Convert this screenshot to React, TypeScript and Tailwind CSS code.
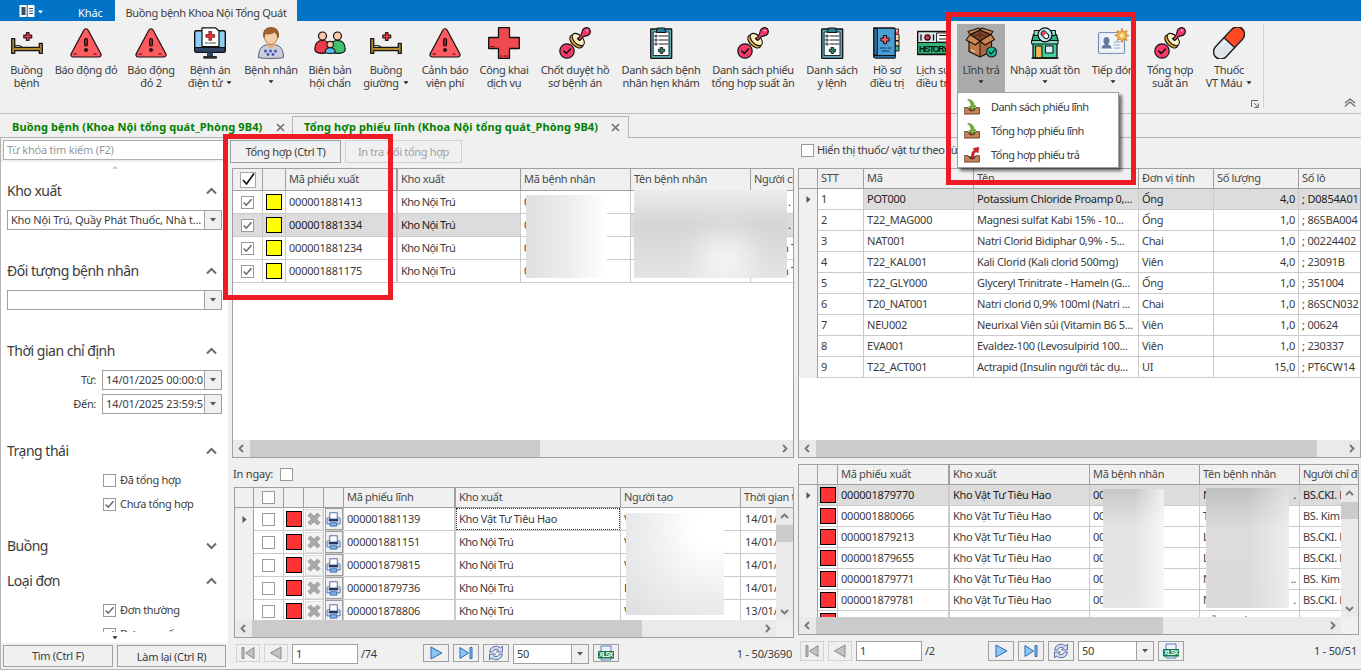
import React from "react";

type Kids = { children?: React.ReactNode };

/* ---------- ribbon icons ---------- */

const Svg = ({ children, size = "size-8", box = "0 0 32 32" }: Kids & { size?: string; box?: string }) => (
  <svg viewBox={box} className={`${size} shrink-0`} fill="none" strokeLinejoin="round" strokeLinecap="round">
    {children}
  </svg>
);

const Bed = () => (
  <Svg>
    <path d="M3.5 18.5h5l2.5 1.5" stroke="#333" strokeWidth="1.2" />
    <path d="M.7 11.7h3v8.6h24.6v-4h3v10h-3v-2.6H3.7v2.6h-3z" fill="#b08a28" stroke="#151515" strokeWidth="1.3" />
    <path d="M15.500 5.500h2.500v2.700h2.700v2.600H18v2.700h-2.500v-2.700h-2.700V8.200h2.700z" fill="#e5404e" stroke="#3b1116" strokeWidth="1.2" />
  </Svg>
);

const Warning = () => (
  <Svg>
    <path d="M13.8 3.2a2.4 2.4 0 0 1 4.4 0l12.6 23.5c.7 1.6-.2 3.3-2 3.3H3.200c-1.800 0-2.700-1.700-2-3.300z" fill="#ff5a60" stroke="#111" strokeWidth="1.2" />
    <rect x="14.500" y="11.500" width="3" height="7.500" rx="1.500" fill="#8c2a28" stroke="#111" strokeWidth="1.100" />
    <circle cx="16" cy="23" r="1.700" fill="#301010" stroke="#111" strokeWidth=".6" />
    <path d="M4 27h2.500M24 27h2" stroke="#301010" strokeWidth="1.200" />
  </Svg>
);

const Monitor = () => (
  <Svg>
    <rect x=".7" y="3.700" width="30.600" height="21.600" rx="1.500" fill="#8fd0f7" stroke="#111" strokeWidth="1.400" />
    <path d="M1 20.500h30v3.300a1.500 1.500 0 0 1-1.500 1.500h-27A1.500 1.500 0 0 1 1 23.800z" fill="#2f4666" stroke="#111" strokeWidth="1" />
    <path d="M13 25.500h6v3.500h-6z" fill="#2f4666" />
    <path d="M10 29.500h12.500v1.700H10z" fill="#24364f" stroke="#111" strokeWidth=".8" />
    <path d="M8 .8h13.500L25 4v15.500H8z" fill="#fff" stroke="#111" strokeWidth="1.200" />
    <path d="M14.900 4.500h2.800v3h3v2.800h-3v3h-2.800v-3h-3V7.500h3z" fill="#e5303d" stroke="#611" strokeWidth=".7" />
    <path d="M11.500 16h2M15 16h6.500" stroke="#333" strokeWidth=".9" />
  </Svg>
);

const Patient = () => (
  <Svg>
    <path d="M3.500 30.500c0-8 3-12 8.500-12.700h8c5.500.7 8.500 4.700 8.500 12.700-3 1.300-22 1.300-25 0z" fill="#c9cedb" stroke="#596075" strokeWidth="1" />
    <path d="M12 14h8v4.500a4.200 4.200 0 0 1-8 0z" fill="#e6b186" />
    <ellipse cx="16" cy="10" rx="6.500" ry="7.500" fill="#f6cda6" stroke="#9a6a3b" strokeWidth=".8" />
    <path d="M8.800 10C7.500 3.500 11 .6 16 .6c6 0 8.500 4 7.300 10-.7-2.600-2-4.300-4-5.600-3 2.300-7.500 2.300-9 1.500-.7 1-1.200 2-1.500 3.500z" fill="#a5632c" stroke="#70401b" strokeWidth=".7" />
    <g fill="#4a56b8">
      <circle cx="10.500" cy="24" r="1.500" /><circle cx="15.500" cy="24" r="1.500" /><circle cx="20.500" cy="24" r="1.500" />
      <circle cx="13" cy="27.500" r="1.400" /><circle cx="18" cy="27.500" r="1.400" />
    </g>
  </Svg>
);

const People = () => (
  <Svg>
    <circle cx="8.500" cy="9" r="4" fill="#fbc7a8" stroke="#111" strokeWidth="1.200" />
    <circle cx="23.500" cy="9" r="4" fill="#fbc7a8" stroke="#111" strokeWidth="1.200" />
    <path d="M.8 22.500c0-6 3-9 7.700-9s7 2 7 6-2.500 6.800-7 6.800-7.700-1.300-7.700-3.800z" fill="#ee3b4c" stroke="#111" strokeWidth="1.200" />
    <path d="M31.200 22.500c0-6-3-9-7.700-9s-7 2-7 6 2.500 6.800 7 6.800 7.700-1.300 7.700-3.800z" fill="#41c170" stroke="#111" strokeWidth="1.200" />
    <path d="M11.200 25.800c0-3 2-5 5-5s5 2 5 5c-3 .9-7 .9-10 0z" fill="#57bdf5" stroke="#111" strokeWidth="1.100" />
    <circle cx="16.200" cy="17.500" r="3.200" fill="#fbc7a8" stroke="#111" strokeWidth="1.100" />
  </Svg>
);

const Cross = () => (
  <Svg>
    <path d="M10.500.7h11v9.800h9.800v11h-9.800v9.800h-11v-9.800H.7v-11h9.800z" fill="#f04a50" stroke="#111" strokeWidth="1.300" />
    <path d="M12.500 29h1.500M16 29h4M3 19.500h3" stroke="#6d1a1f" strokeWidth="1.100" />
  </Svg>
);

const Stamp = () => (
  <Svg>
    <ellipse cx="17.300" cy="14.500" rx="4.500" ry="8" transform="rotate(-45 17.300 14.500)" fill="#e8ab37" stroke="#111" strokeWidth="1.100" />
    <ellipse cx="19.300" cy="12.500" rx="4.300" ry="7.500" transform="rotate(-45 19.300 12.500)" fill="#fdf0c0" stroke="#111" strokeWidth="1.100" />
    <path d="M18.500 11.500c3-1.500 4-3.500 4.500-6.500.5-3 3-4.700 5.800-4.200 3 .9 3.200 4.700 1.200 6.700-1.600 1.600-4 1.200-5.700 2.300-1.200.8-2 2.700-3.800 3.700z" fill="#f63a68" stroke="#111" strokeWidth="1.200" />
    <circle cx="28" cy="3.500" r=".8" fill="#fff" />
    <circle cx="8" cy="24" r="7.200" fill="#f63a68" stroke="#111" strokeWidth="1.200" />
    <path d="M4.800 24l2.400 2.400L11.500 22" stroke="#111" strokeWidth="1.500" />
  </Svg>
);

const Clipboard = () => (
  <Svg>
    <rect x="5.700" y="2" width="21" height="29.300" rx=".6" fill="#5fa9b0" stroke="#111" strokeWidth="1.300" />
    <rect x="8.500" y="5" width="15.500" height="23.500" fill="#fff" stroke="#1a2f33" strokeWidth="1" />
    <path d="M12.700 1h7l1 4.500h-9z" fill="#2d7c96" stroke="#111" strokeWidth="1" />
    <path d="M14 9h9M14 13h9M14 17h9" stroke="#222" strokeWidth="1" />
    <path d="M10.300 8.200h1.700v1.700h-1.700zM10.300 12.200h1.700v1.700h-1.700zM10.300 16.200h1.700v1.700h-1.700z" stroke="#222" strokeWidth=".9" />
    <path d="M15.300 20.500h2.400v1.800h1.900v2.400h-1.900v1.800h-2.400v-1.800h-1.900v-2.400h1.900z" fill="#1f8a68" stroke="#111" strokeWidth=".8" />
  </Svg>
);

const Book = () => (
  <Svg>
    <path d="M21 2h6.500v5H24zM22 7.500h6v6h-6zM22 14h6v5h-6z" fill="#f6d0a0" stroke="#111" strokeWidth=".9" />
    <path d="M22 4.500h5.500v3H22z" fill="#e8536a" />
    <path d="M22 19h6v5h-6z" fill="#4bb58f" stroke="#111" strokeWidth=".9" />
    <path d="M2.800 1h19.700c1 0 1.700.7 1.700 1.700V29H5a2.200 2.200 0 0 0-2.200 1z" fill="#4b9fd8" stroke="#111" strokeWidth="1.300" />
    <path d="M3.300 1.500h3V28h-3zM3 28.500h21.200v2.700H4.500A1.400 1.400 0 0 1 3 30z" fill="#2d70a6" stroke="#111" strokeWidth="1" />
    <path d="M12.500 8.500h3v2.600h2.600v3h-2.600v2.600h-3v-2.600H9.900v-3h2.600z" fill="#fb5866" stroke="#111" strokeWidth="1" />
    <path d="M9 21h6M17 21h3M11 24h7" stroke="#163550" strokeWidth="1.100" />
  </Svg>
);

const History = () => (
  <Svg>
    <rect x=".7" y="4.500" width="34" height="23" fill="#dfe3e6" stroke="#111" strokeWidth="1.400" />
    <path d="M1 15.500h33V27H1z" fill="#32b276" stroke="#111" strokeWidth="1" />
    <circle cx="10.500" cy="10.500" r="2.600" fill="#ee3340" stroke="#111" strokeWidth="1.200" />
    <path d="M4 8v5M16.500 8v5" stroke="#111" strokeWidth="1.300" />
    <path d="M20 6h12v9H20z" fill="#fff" stroke="#111" strokeWidth=".9" />
    <path d="M22.500 8.500h8M22.500 12h8" stroke="#111" strokeWidth="1.200" />
    <text x="2" y="24.600" fontSize="8.500" fontWeight="700" fontFamily="Liberation Sans, sans-serif" textLength="29" fill="#06170f">HISTORY</text>
  </Svg>
);

const Box = () => (
  <Svg>
    <path d="M4 10.500l11 4.500 11.500-4.500V24L15 30 4 24.500z" fill="#c17b4d" stroke="#1d120b" strokeWidth="1.200" />
    <path d="M15 15v15l11.500-6V10.500z" fill="#ad683d" stroke="#1d120b" strokeWidth="1" />
    <path d="M5 8L15 2.500 26 8l-11 6z" fill="#7b4627" stroke="#1d120b" strokeWidth="1.100" />
    <path d="M15 2.500V10M8 9.500l7-2 7 2" stroke="#4b2815" strokeWidth=".9" />
    <path d="M5 7.500L1 13l9.500 5L15 14zM26 7.500l3.500 5-9.500 5.500-5-4zM5 7.500L3 4.500 14 1l1 2zM26 7.500l2-3L17 1l-2 2z" fill="#cb8757" stroke="#1d120b" strokeWidth="1.100" />
    <path d="M6.500 23l3 1.500" stroke="#f3d4bb" strokeWidth="1.300" />
    <circle cx="26.500" cy="25" r="5" fill="#1fbf9a" stroke="#0a2a24" strokeWidth="1.200" />
    <path d="M24 25l2 2 3.300-3.500" stroke="#07241d" strokeWidth="1.200" />
  </Svg>
);

const Shop = () => (
  <Svg>
    <path d="M4 15.500h24V31H4z" fill="#44d09a" stroke="#111" strokeWidth="1.300" />
    <path d="M4.500 7.500h23l1.700 6.500H2.800z" fill="#2fb583" stroke="#111" strokeWidth="1.200" />
    <path d="M5.500 3.500h4.500v5H5.500zM22 3.500h4.500v5H22zM3 13.500h26v3.500H3z" fill="#7fe0bd" stroke="#111" strokeWidth="1" />
    <circle cx="16" cy="7.800" r="7" fill="#c9e9f6" stroke="#111" strokeWidth="1.200" />
    <g transform="rotate(-45 16 7.800)">
      <rect x="13.500" y="3.500" width="5" height="8.600" rx="2.500" fill="#fff" stroke="#111" strokeWidth="1" />
      <path d="M14 7.500V6a2 2 0 0 1 4 0v1.500z" fill="#ef4268" />
    </g>
    <rect x="6.500" y="19" width="6.500" height="12" fill="#f2b659" stroke="#111" strokeWidth="1.100" />
    <rect x="16.500" y="19" width="7.500" height="7" fill="#d7f1fb" stroke="#111" strokeWidth="1.100" />
    <path d="M3 31.200h26" stroke="#111" strokeWidth="1.300" />
  </Svg>
);

const Card = () => (
  <Svg>
    <rect x="1.500" y="5.500" width="26" height="21" rx="1.500" fill="#f2f6fb" stroke="#7b90b5" strokeWidth="1.100" />
    <path d="M3 7h23v18H3z" stroke="#dbe5f2" strokeWidth="1.200" />
    <path d="M4.500 21.500c0-2.500 1.500-3.300 3.500-4-1.300-1-1.500-2.500-1.500-4 0-2 1-3.500 3-3.500s3 1.500 3 3.500c0 1.500-.3 3-1.500 4 2 .7 3.500 1.500 3.500 4z" fill="#66799c" />
    <path d="M17 15h6M17 18h6M17 21h6" stroke="#93a5c2" strokeWidth="1.200" />
    <path d="M25 1.500l1.500 3.600 3.600-1.500-1.500 3.600 3.300 1.300-3.300 1.500 1.500 3.500-3.600-1.500L25 15.600 23.500 12l-3.600 1.500 1.500-3.500-3.500-1.500 3.500-1.300-1.500-3.600 3.600 1.500z" fill="#f5b64b" stroke="#c77b20" strokeWidth=".8" />
    <circle cx="25" cy="8.500" r="2.300" fill="#ffe3a0" />
  </Svg>
);

const Pill = () => (
  <Svg>
    <g transform="rotate(43 16 16)">
      <path d="M9.200 15.500V3.500a6.800 6.800 0 0 1 13.600 0v12z" fill="#ff4a24" />
      <path d="M9.200 2.500a6.800 6.800 0 0 1 13.600 0v3H9.200z" fill="#ff4a24" />
      <path d="M9.200 15.500v13a6.800 6.800 0 0 0 13.600 0v-13z" fill="#dde5e9" />
      <rect x="8.700" y="-3.300" width="14.600" height="38.600" rx="7.300" stroke="#1b1b1b" strokeWidth="1.400" />
      <path d="M9.200 15.500h13.600" stroke="#1b1b1b" strokeWidth="1.200" />
      <path d="M12 17.500v7" stroke="#fff" strokeWidth="1.300" />
    </g>
  </Svg>
);

const Crate = ({ red }: { red?: boolean }) => (
  <Svg size="size-4" box="0 0 16 16">
    <path d="M.6 8.700h3.600l1 2.300h5.600l1-2.300h3.600V15H.6z" fill="#c98556" stroke="#5a3520" strokeWidth=".9" />
    <path d="M4.800 9.200h6.400l-1.200 3H6z" fill="#5e3826" />
    {red ? (
      <path d="M7.500 11.500V8.500C7.500 5.500 8.500 4 10.500 3.500L9 1.500l6-1.200L14 6l-1.700-1.300C10.500 5.400 10 6.500 10 8.500v3z" fill="#dc2430" stroke="#8d1219" strokeWidth=".5" />
    ) : (
      <path d="M4 .6c4 0 6 2.600 6 6.200h1.800L8.500 11.500 4.800 7.500h2.400C7.200 4.500 6 2 4 .6z" fill="#7cb534" stroke="#426e17" strokeWidth=".6" />
    )}
  </Svg>
);

/* ---------- ribbon ---------- */

type Item = { icon: () => React.JSX.Element; lines: string[]; cls: string; drop?: "inline" | "below" };

const items: Item[] = [
  { icon: Bed, lines: ["Buồng", "bệnh"], cls: "ml-[6px] w-[41px]" },
  { icon: Warning, lines: ["Báo động đỏ"], cls: "ml-[4px] w-[70px]" },
  { icon: Warning, lines: ["Báo động", "đỏ 2"], cls: "ml-[4px] w-[52px]" },
  { icon: Monitor, lines: ["Bệnh án", "điện tử"], cls: "ml-[5px] w-[56px]", drop: "inline" },
  { icon: Patient, lines: ["Bệnh nhân"], cls: "ml-[3px] w-[60px]", drop: "below" },
  { icon: People, lines: ["Biên bản", "hội chẩn"], cls: "ml-[5px] w-[48px]" },
  { icon: Bed, lines: ["Buồng", "giường"], cls: "ml-[7px] w-[50px]", drop: "inline" },
  { icon: Warning, lines: ["Cảnh báo", "viện phí"], cls: "ml-[5px] w-[58px]" },
  { icon: Cross, lines: ["Công khai", "dịch vụ"], cls: "ml-[3px] w-[54px]" },
  { icon: Stamp, lines: ["Chốt duyệt hồ", "sơ bệnh án"], cls: "ml-[6px] w-[76px]" },
  { icon: Clipboard, lines: ["Danh sách bệnh", "nhân hẹn khám"], cls: "ml-[6px] w-[84px]" },
  { icon: Stamp, lines: ["Danh sách phiếu", "tổng hợp suất ăn"], cls: "ml-[6px] w-[88px]" },
  { icon: Clipboard, lines: ["Danh sách", "y lệnh"], cls: "ml-[7px] w-[56px]" },
  { icon: Book, lines: ["Hồ sơ", "điều trị"], cls: "ml-[8px] w-[38px]" },
  { icon: History, lines: ["Lịch sử", "điều trị"], cls: "ml-[7px] w-[40px]" },
  { icon: Box, lines: ["Lĩnh trả"], cls: "ml-[4px] w-[48px] bg-[#ababab]", drop: "below" },
  { icon: Shop, lines: ["Nhập xuất tồn"], cls: "ml-[2px] w-[76px]", drop: "below" },
  { icon: Card, lines: ["Tiếp đón"], cls: "ml-[7px] w-[46px]", drop: "below" },
  { icon: Stamp, lines: ["Tổng hợp", "suất ăn"], cls: "ml-[7px] w-[54px]" },
  { icon: Pill, lines: ["Thuốc", "VT Máu"], cls: "ml-[4px] w-[56px]", drop: "inline" },
];

const Caret = ({ dark = true }: { dark?: boolean }) => (
  <svg viewBox="0 0 6 4" className="h-[4px] w-[6px] shrink-0">
    <path d="M.5.300h5L3 3.200z" fill={dark ? "#222" : "#c0c0c0"} />
  </svg>
);

const Ribbon = () => (
  <div className="flex h-[93px] shrink-0 border-b border-[#bdbdbd] bg-[#f0f0f0] pt-[3px]">
    {items.map((it, i) => (
      <div key={i} className={`flex h-[68px] shrink-0 flex-col items-center pt-[3px] ${it.cls}`}>
        <it.icon />
        <div className="mt-[4px] whitespace-nowrap text-center leading-[13px]">
          <div>{it.lines[0]}</div>
          {it.lines[1] && (
            <div className="flex items-center justify-center gap-[4px]">
              {it.lines[1]}
              {it.drop === "inline" && <Caret />}
            </div>
          )}
          {it.drop === "below" && (
            <div className="flex h-[12px] items-center justify-center"><Caret /></div>
          )}
        </div>
      </div>
    ))}
    <div className="ml-[-6px] flex h-[84px] w-[13px] flex-col justify-end border-r border-[#d0d0d0]">
      <svg viewBox="0 0 8 8" className="size-[8px]" fill="none" stroke="#666">
        <path d="M.5 7V.5H7M3 3l4 4M7.300 3.500v4h-4" />
      </svg>
    </div>
    <div className="flex h-[86px] flex-1 items-end justify-end pr-[5px] pb-[3px]">
      <svg viewBox="0 0 12 9" className="h-[9px] w-[12px]" fill="none" stroke="#666" strokeWidth="1.100">
        <path d="M1 5l5-4 5 4M1 8.500l2-2 3-2.500 3 2.500 2 2" />
      </svg>
    </div>
  </div>
);

/* ---------- small controls ---------- */

const Check = ({ on, big }: { on?: boolean; big?: boolean }) =>
  big ? (
    <span className="flex size-[16px] shrink-0 items-center justify-center border border-[#a8a8a8] bg-white">
      <svg viewBox="0 0 14 14" className="size-[15px]" fill="none" stroke="#111" strokeWidth="1.700">
        <path d="M2 7.500l3.500 4L13 1" />
      </svg>
    </span>
  ) : (
    <span className="flex size-[13px] shrink-0 items-center justify-center border border-[#9a9a9a] bg-white">
      {on && (
        <svg viewBox="0 0 11 11" className="size-[11px]" fill="none" stroke="#666" strokeWidth="1.500">
          <path d="M1.700 5.500l2.500 2.700 5.300-6" />
        </svg>
      )}
    </span>
  );

const Arrow = ({ dir }: { dir: "l" | "r" | "u" | "d" }) => {
  const d = { l: "M6 1L2.500 4.500 6 8", r: "M3 1l3.500 3.500L3 8", u: "M1 6l3.500-3.500L8 6", d: "M1 3l3.500 3.500L8 3" }[dir];
  return (
    <span className="flex size-[17px] shrink-0 items-center justify-center">
      <svg viewBox="0 0 9 9" className="size-[9px]" fill="none" stroke="#777" strokeWidth="1.900"><path d={d} /></svg>
    </span>
  );
};

const HScroll = ({ thumb, corner }: { thumb: string; corner?: boolean }) => (
  <div className="flex h-[17px] shrink-0 bg-[#f0f0f0]">
    <div className="flex flex-1 bg-[#eaeaea]">
      <Arrow dir="l" />
      <div className={`bg-[#cbcbcb] ${thumb}`} />
      <div className="flex-1" />
      <Arrow dir="r" />
    </div>
    {corner && <div className="w-[17px]" />}
  </div>
);

const VScroll = () => (
  <div className="flex w-[17px] shrink-0 flex-col bg-[#eaeaea]">
    <Arrow dir="u" />
    <div className="h-[17px] bg-[#cbcbcb]" />
    <div className="flex-1" />
    <Arrow dir="d" />
  </div>
);

const Combo = ({ text, cls }: { text: string; cls: string }) => (
  <div className={`flex h-[20px] border border-[#a0a0a0] bg-white ${cls}`}>
    <div className="flex-1 overflow-hidden whitespace-nowrap pl-[3px] leading-[18px]">{text}</div>
    <div className="flex w-[17px] shrink-0 items-center justify-center border-l border-[#a0a0a0] bg-[#f0f0f0]">
      <svg viewBox="0 0 6 4" className="h-[4px] w-[6px]"><path d="M0 0h6L3 3.500z" fill="#555" /></svg>
    </div>
  </div>
);

/* ---------- grids ---------- */

const Cell = ({ w, children, cls = "", thick, head }: Kids & { w: string; cls?: string; thick?: boolean; head?: boolean }) => (
  <div
    className={`flex shrink-0 items-center overflow-hidden whitespace-nowrap border-b ${
      head ? "border-[#a0a0a0] text-[#484848]" : "border-b-[#cbcbcb] border-r-[#cbcbcb]"
    } ${thick ? "border-r-2 border-r-[#a0a0a0]" : "border-r"} ${w} ${cls}`}
  >
    {children}
  </div>
);

const Gutter = ({ active, cls = "" }: { active?: boolean; cls?: string }) => (
  <div className={`flex w-[19px] shrink-0 items-center justify-center border-r border-[#a0a0a0] bg-[#f0f0f0] ${cls}`}>
    {active && <svg viewBox="0 0 5 7" className="h-[7px] w-[5px]"><path d="M.5 0L4.500 3.500.500 7z" fill="#555" /></svg>}
  </div>
);

const Chip = ({ cls }: { cls: string }) => <span className={`size-[16px] shrink-0 border border-black ${cls}`} />;
const P = "pl-[3px]";
const CODE = "pl-[3px] tracking-[-0.2px]";

const issueRows = [
  ["000001881413", "0", "."],
  ["000001881334", "0", "."],
  ["000001881234", "0", "n Thị"],
  ["000001881175", "0", "n Thị"],
];

const IssueGrid = () => (
  <div className="ml-[4px] mt-[5px] flex h-[290px] w-[562px] flex-col overflow-hidden border border-[#a0a0a0] bg-white">
    <div className="relative flex-1 overflow-hidden">
      <div className="flex h-[22px] bg-[#f0f0f0]">
        <Cell head w="w-[30px]" cls="justify-center"><Check big /></Cell>
        <Cell head w="w-[23px]" />
        <Cell head thick w="w-[112px]" cls={P}>Mã phiếu xuất</Cell>
        <Cell head w="w-[123px]" cls={P}>Kho xuất</Cell>
        <Cell head w="w-[110px]" cls={P}>Mã bệnh nhân</Cell>
        <Cell head w="w-[120px]" cls={P}>Tên bệnh nhân</Cell>
        <Cell head w="w-[80px]" cls={P}>Người chỉ định</Cell>
      </div>
      {issueRows.map((r, i) => {
        const sel = i === 1 ? "bg-[#dcdcdc] text-[#1e1e1e]" : "";
        return (
          <div key={i} className="flex h-[23px]">
            <Cell w="w-[30px]" cls={`justify-center ${sel}`}><Check on /></Cell>
            <Cell w="w-[23px]" cls={`justify-center ${sel}`}><Chip cls="bg-[#ffff00]" /></Cell>
            <Cell thick w="w-[112px]" cls={`${CODE} ${sel}`}>{r[0]}</Cell>
            <Cell w="w-[123px]" cls={`pl-[3px] tracking-[-0.6px] ${sel}`}>Kho Nội Trú</Cell>
            <Cell w="w-[110px]" cls={P}>{r[1]}</Cell>
            <Cell w="w-[120px]" cls={sel} />
            <Cell w="w-[80px]" cls={`${i < 2 ? "pl-[37px]" : "pl-[31px]"} ${sel}`}>{r[2]}</Cell>
          </div>
        );
      })}
      <div className="absolute left-[293px] top-[26px] h-[83px] w-[81px] bg-linear-to-r from-[#dfe0df] via-[#ebeceb] to-white" />
      <div className="absolute left-[401px] top-[21px] h-[88px] w-[153px] overflow-hidden bg-linear-to-b from-[#ececee] via-[#d5d5d7] via-40% to-[#e4e4e6]">
        <div className="absolute left-[66px] top-[46px] h-[46px] w-[50px] rounded-full bg-white/85 blur-lg" />
      </div>
    </div>
    <HScroll thumb="w-[290px]" />
  </div>
);

const drugs = [
  ["1", "POT000", "Potassium Chloride Proamp 0,...", "Ống", "4,0", "; D0854A01"],
  ["2", "T22_MAG000", "Magnesi sulfat Kabi 15% - 10...", "Ống", "1,0", "; 86SBA004"],
  ["3", "NAT001", "Natri Clorid Bidiphar 0,9% - 5...", "Chai", "1,0", "; 00224402"],
  ["4", "T22_KAL001", "Kali Clorid (Kali clorid 500mg)", "Viên", "4,0", "; 23091B"],
  ["5", "T22_GLY000", "Glyceryl Trinitrate - Hameln (G...", "Ống", "1,0", "; 351004"],
  ["6", "T20_NAT001", "Natri clorid 0,9% 100ml (Natri ...", "Chai", "1,0", "; 86SCN032"],
  ["7", "NEU002", "Neurixal Viên sủi (Vitamin B6 5...", "Viên", "1,0", "; 00624"],
  ["8", "EVA001", "Evaldez-100 (Levosulpirid 100...", "Viên", "1,0", "; 230337"],
  ["9", "T22_ACT001", "Actrapid (Insulin người tác dụ...", "UI", "15,0", "; PT6CW14"],
];

const DrugGrid = () => (
  <div className="mt-[5px] flex h-[290px] w-[563px] flex-col overflow-hidden border border-[#a0a0a0] bg-white">
    <div className="flex-1 overflow-hidden">
      <div className="flex h-[20px] bg-[#f0f0f0]">
        <Gutter cls="border-b" />
        <Cell head w="w-[46px]" cls={P}>STT</Cell>
        <Cell head w="w-[110px]" cls={P}>Mã</Cell>
        <Cell head w="w-[165px]" cls={P}>Tên</Cell>
        <Cell head w="w-[75px]" cls={P}>Đơn vị tính</Cell>
        <Cell head w="w-[85px]" cls={P}>Số lượng</Cell>
        <Cell head w="w-[70px]" cls={P}>Số lô</Cell>
      </div>
      {drugs.map((r, i) => {
        const sel = i === 0 ? "bg-[#dcdcdc] text-[#1e1e1e]" : "";
        return (
          <div key={i} className="flex h-[21px]">
            <Gutter active={i === 0} />
            <Cell w="w-[46px]" cls={P}>{r[0]}</Cell>
            <Cell w="w-[110px]" cls={`${CODE} ${sel}`}>{r[1]}</Cell>
            <Cell w="w-[165px]" cls={`${P} ${sel}`}>{r[2]}</Cell>
            <Cell w="w-[75px]" cls={`${P} ${sel}`}>{r[3]}</Cell>
            <Cell w="w-[85px]" cls={`justify-end pr-[3px] tracking-[-0.2px] ${sel}`}>{r[4]}</Cell>
            <Cell w="w-[70px]" cls={`${CODE} ${sel}`}>{r[5]}</Cell>
          </div>
        );
      })}
    </div>
    <HScroll thumb="w-[501px]" />
  </div>
);

const Cancel = () => (
  <span className="flex h-[21px] w-[18px] items-center justify-center border border-[#dedede] bg-[#f4f4f4]">
    <svg viewBox="0 0 12 12" className="size-[14px] shrink-0">
      <path d="M3 .8L6 3.700 9 .8 11.200 3 8.300 6l2.900 3L9 11.200 6 8.300 3 11.200.800 9 3.700 6 .800 3z" fill="#a9a9a9" stroke="#8e8e8e" strokeWidth=".6" />
    </svg>
  </span>
);

const Printer = () => (
  <span className="flex h-[22px] w-[18px] items-center justify-center border border-[#9c9c9c] bg-[#f0f0f0]">
    <svg viewBox="0 0 16 16" className="size-[15px] shrink-0">
      <path d="M1 7.500c0-1 .5-1.500 1.500-1.500h11c1 0 1.500.5 1.500 1.500v5.200H1z" fill="#dfe8f8" stroke="#4a6aa8" />
      <path d="M4 .8h8v6.700H4z" fill="#fff" stroke="#4a6aa8" />
      <path d="M3 7.500h10v2.500H3z" fill="#26365c" />
      <path d="M4.500 11.500h7V15h-7z" fill="#7db8f0" stroke="#3c62a5" />
    </svg>
  </span>
);

const slips = [
  ["000001881139", "Kho Vật Tư Tiêu Hao", "V", "14/01/2025"],
  ["000001881151", "Kho Nội Trú", "V", "14/01/2025"],
  ["000001879815", "Kho Nội Trú", "V", "14/01/2025"],
  ["000001879736", "Kho Nội Trú", "P", "14/01/2025"],
  ["000001878806", "Kho Nội Trú", "V", "13/01/2025"],
];

const SlipGrid = () => (
  <div className="ml-[6px] flex h-[151px] w-[560px] shrink-0 flex-col overflow-hidden border border-[#a0a0a0] bg-white">
    <div className="flex h-[20px] shrink-0 overflow-hidden bg-[#f0f0f0]">
      <Gutter cls="border-b" />
      <Cell head w="w-[30px]" cls="justify-center"><Check /></Cell>
      <Cell head w="w-[20px]" /><Cell head w="w-[20px]" /><Cell head w="w-[20px]" />
      <Cell head thick w="w-[112px]" cls={P}>Mã phiếu lĩnh</Cell>
      <Cell head w="w-[165px]" cls={P}>Kho xuất</Cell>
      <Cell head w="w-[120px]" cls={P}>Người tạo</Cell>
      <Cell head w="w-[80px]" cls={P}>Thời gian tạo</Cell>
    </div>
    <div className="flex h-[112px] shrink-0">
      <div className="relative flex-1 overflow-hidden">
        {slips.map((r, i) => (
          <div key={i} className="flex h-[23px]">
            <Gutter active={i === 0} />
            <Cell w="w-[30px]" cls="justify-center"><Check /></Cell>
            <Cell w="w-[20px]" cls="justify-center"><Chip cls="bg-[#ff3333]" /></Cell>
            <Cell w="w-[20px]" cls="justify-center"><Cancel /></Cell>
            <Cell w="w-[20px]" cls="justify-center"><Printer /></Cell>
            <Cell thick w="w-[112px]" cls={CODE}>{r[0]}</Cell>
            <Cell w="w-[165px]">
              <span className={`flex h-full w-full items-center ${i === 0 ? "border border-dotted border-[#333] pl-[2px]" : "pl-[3px] tracking-[-0.6px]"}`}>{r[1]}</span>
            </Cell>
            <Cell w="w-[120px]" cls={P}>{r[2]}</Cell>
            <Cell w="w-[80px]" cls="pl-[4px] tracking-[-0.1px]">{r[3]}</Cell>
          </div>
        ))}
        <div className="absolute left-[391px] top-[5px] h-[102px] w-[98px] bg-radial-[at_90%_15%] from-white from-15% via-[#eeeeef] via-55% to-[#dddedf]" />
      </div>
      <VScroll />
    </div>
    <HScroll thumb="w-[390px]" corner />
  </div>
);

const details = [
  ["000001879770", "N", ".", "BS.CKI. Ng"],
  ["000001880066", "T", "", "BS. Kim Ng"],
  ["000001879213", "L", "", "BS.CKI. Ng"],
  ["000001879655", "L", "", "BS.CKI. Ng"],
  ["000001879771", "N", "..", "BS. Kim Ng"],
  ["000001879781", "N", ".", "BS.CKI. Ng"],
  ["000001879790", "Đỗ Thị Hồng", "", "BS.CKI. Ng"],
];

const DetailGrid = () => (
  <div className="mt-[6px] flex h-[171px] w-[561px] shrink-0 flex-col overflow-hidden border border-[#a0a0a0] bg-white">
    <div className="flex h-[20px] shrink-0 overflow-hidden bg-[#f0f0f0]">
      <Gutter cls="border-b" />
      <Cell head w="w-[20px]" />
      <Cell head thick w="w-[112px]" cls={P}>Mã phiếu xuất</Cell>
      <Cell head w="w-[140px]" cls={P}>Kho xuất</Cell>
      <Cell head w="w-[110px]" cls={P}>Mã bệnh nhân</Cell>
      <Cell head w="w-[100px]" cls={P}>Tên bệnh nhân</Cell>
      <Cell head w="w-[90px]" cls="pl-[3px] tracking-[-0.5px]">Người chỉ định</Cell>
    </div>
    <div className="flex h-[132px] shrink-0">
      <div className="relative flex-1 overflow-hidden">
        {details.map((r, i) => {
          const sel = i === 0 ? "bg-[#dcdcdc] text-[#1e1e1e]" : "";
          return (
            <div key={i} className="flex h-[21px]">
              <Gutter active={i === 0} />
              <Cell w="w-[20px]" cls={`justify-center ${sel}`}><Chip cls="bg-[#ff3333]" /></Cell>
              <Cell thick w="w-[112px]" cls={`${CODE} ${sel}`}>{r[0]}</Cell>
              <Cell w="w-[140px]" cls={`${P} ${sel}`}>Kho Vật Tư Tiêu Hao</Cell>
              <Cell w="w-[110px]" cls={`${P} ${sel}`}>00</Cell>
              <Cell w="w-[100px]" cls={`justify-between px-[3px] ${sel}`}><span>{r[1]}</span><span>{r[2]}</span></Cell>
              <Cell w="w-[90px]" cls={`${P} ${sel}`}>{r[3]}</Cell>
            </div>
          );
        })}
        <div className="absolute left-[304px] top-[4px] h-[119px] w-[61px] bg-linear-to-b from-[#c6c8c8] via-[#e2e4e4] via-30% to-[#e4e6e6]">
          <div className="h-full bg-linear-to-r from-transparent via-transparent to-white/70" />
        </div>
        <div className="absolute left-[407px] top-[3px] h-[120px] w-[83px] bg-linear-to-b from-[#bfc0c2] via-[#dcdcde] via-35% to-[#dadadc]">
          <div className="h-full bg-linear-to-r from-transparent via-transparent to-white/50" />
        </div>
      </div>
      <VScroll />
    </div>
    <HScroll thumb="w-[347px]" corner />
  </div>
);

/* ---------- pager ---------- */

const PBtn = ({ kind, cls }: { kind: "first" | "prev" | "next" | "last" | "refresh" | "xlsx"; cls: string }) => {
  const off = kind === "first" || kind === "prev";
  const fill = off ? "#c2c2c2" : "#8cc6f5";
  const line = off ? "#8d8d8d" : "#2f68b8";
  return (
    <span className={`flex shrink-0 items-center justify-center border bg-[#f0f0f0] ${off ? "border-[#d2d2d2]" : "border-[#a0a0a0]"} ${cls}`}>
      <svg viewBox="0 0 16 16" className="size-[16px] shrink-0" fill={fill} stroke={line}>
        {kind === "first" && <path d="M2 2.500h2v11H2zM14 2.500v11L5.500 8z" />}
        {kind === "prev" && <path d="M13 2v12L2.500 8z" />}
        {kind === "next" && <path d="M3 2v12l11-6z" />}
        {kind === "last" && <path d="M2 2.500v11l8.500-5.500zM12 2.500h2v11h-2z" />}
        {kind === "refresh" && (
          <path d="M1.500 7a6.500 6.500 0 0 1 11-4L14.500 1v6h-6l2-2A4 4 0 0 0 4.500 7zM14.500 9a6.500 6.500 0 0 1-11 4L1.500 15V9h6l-2 2a4 4 0 0 0 6-2z" fill="#d3def3" stroke="#50639f" strokeWidth=".9" />
        )}
        {kind === "xlsx" && (
          <g>
            <path d="M3 1h10v14H3z" fill="#eef3fb" stroke="#5b7fb5" />
            <rect x="0" y="6" width="16" height="7.500" fill="#0e7a4a" stroke="none" />
            <text x="1" y="12.200" fontSize="6.500" fontWeight="700" textLength="14" fontFamily="Liberation Sans, sans-serif" fill="#fff" stroke="none">XLSX</text>
          </g>
        )}
      </svg>
    </span>
  );
};

const Pager = ({ total, range, cls, btn, tw }: { total: string; range: string; cls: string; btn: string; tw: string }) => (
  <div className={`flex items-start ${cls}`}>
    <PBtn kind="first" cls={`w-[24px] ${btn}`} />
    <PBtn kind="prev" cls={`ml-[4px] w-[24px] ${btn}`} />
    <div className="ml-[4px] h-[20px] w-[66px] border border-[#a0a0a0] bg-white pl-[3px] leading-[18px]">1</div>
    <div className={`ml-[3px] leading-[20px] ${tw}`}>{total}</div>
    <PBtn kind="next" cls={`w-[26px] ${btn}`} />
    <PBtn kind="last" cls={`ml-[4px] w-[26px] ${btn}`} />
    <PBtn kind="refresh" cls={`ml-[4px] w-[26px] ${btn}`} />
    <Combo text="50" cls="ml-[4px] w-[76px]" />
    <PBtn kind="xlsx" cls={`ml-[4px] w-[26px] ${btn}`} />
    <div className="flex-1 text-right leading-[20px] tracking-[-0.2px]">{range}</div>
  </div>
);

/* ---------- filter panel ---------- */

const Section = ({ title, cls, closed, children }: Kids & { title: string; cls: string; closed?: boolean }) => (
  <div className={`shrink-0 ${cls}`}>
    <div className="flex h-[39px] items-center justify-between pl-[6px] pr-[11px] text-[14px] tracking-[-0.5px]">
      {title}
      <svg viewBox="0 0 11 8" className="h-[8px] w-[11px]" fill="none" stroke="#6a6a6a" strokeWidth="2">
        <path d={closed ? "M1 1.500l4.500 4.500L10 1.500" : "M1 6.500L5.500 2 10 6.500"} />
      </svg>
    </div>
    {children}
  </div>
);

const CheckRow = ({ on, label }: { on?: boolean; label: string }) => (
  <div className="mb-[4px] flex h-[20px] items-center gap-[4px] pl-[102px]"><Check on={on} />{label}</div>
);

const Filters = () => (
  <div className="flex w-[228px] shrink-0 flex-col border-l border-[#b5b5b5]">
    <div className="ml-[2px] mt-[2px] h-[20px] w-[224px] shrink-0 border border-[#b0b0b0] bg-white pl-[3px] leading-[18px] tracking-[-0.2px] text-[#999]">
      Từ khóa tìm kiếm (F2)
    </div>
    <div className="mt-[2px] flex h-[481px] shrink-0 flex-col bg-white">
      <div className="flex h-[9px] shrink-0 items-center justify-center"><span className="rotate-180"><Caret dark={false} /></span></div>
      <div className="flex h-[461px] shrink-0 flex-col overflow-hidden">
        <Section title="Kho xuất" cls="h-[80px]">
          <Combo text="Kho Nội Trú, Quầy Phát Thuốc, Nhà t..." cls="ml-[6px] w-[215px] tracking-[-0.2px]" />
        </Section>
        <Section title="Đối tượng bệnh nhân" cls="h-[80px]">
          <Combo text="" cls="ml-[6px] w-[215px]" />
        </Section>
        <Section title="Thời gian chỉ định" cls="h-[100px]">
          <div className="mb-[4px] flex h-[20px] items-center">
            <span className="w-[95px] text-right">Từ:</span>
            <Combo text="14/01/2025 00:00:0" cls="ml-[6px] w-[120px] tracking-[-0.1px]" />
          </div>
          <div className="flex h-[20px] items-center">
            <span className="w-[95px] text-right">Đến:</span>
            <Combo text="14/01/2025 23:59:5" cls="ml-[6px] w-[120px] tracking-[-0.1px]" />
          </div>
        </Section>
        <Section title="Trạng thái" cls="h-[95px]">
          <CheckRow label="Đã tổng hợp" />
          <CheckRow on label="Chưa tổng hợp" />
        </Section>
        <Section title="Buồng" cls="h-[35px]" closed />
        <Section title="Loại đơn" cls="h-[90px]">
          <CheckRow on label="Đơn thường" />
          <CheckRow on label="Đơn cao cấp" />
        </Section>
      </div>
      <div className="flex flex-1 items-center justify-center"><Caret /></div>
    </div>
    <div className="mt-[2px] flex gap-[4px] pl-[2px] text-center leading-[20px]">
      <div className="h-[22px] w-[110px] border border-[#a0a0a0]">Tìm (Ctrl F)</div>
      <div className="h-[22px] w-[109px] border border-[#a0a0a0] leading-[22px]">Làm lại (Ctrl R)</div>
    </div>
  </div>
);

/* ---------- page ---------- */

const CloseX = () => (
  <svg viewBox="0 0 9 9" className="size-[9px]" fill="none" stroke="#707070" strokeWidth="1.600"><path d="M1 1l7 7M8 1L1 8" /></svg>
);

export default function App() {
  return (
    <div className="relative flex h-[670px] w-[1361px] flex-col overflow-hidden bg-[#f0f0f0] font-['Noto_Sans',sans-serif] text-[11px] tracking-[-0.32px] text-[#3c3c3c]">
      <div className="flex h-[21px] shrink-0 items-center bg-[#0173c7] leading-[21px]">
        <svg viewBox="0 0 24 12" className="ml-[19px] h-[12px] w-[25px]">
          <path d="M0 0h15v12H0z" fill="#fff" />
          <path d="M2 2h4v8H2zM7.200 0h1v12h-1zM9.500 3h4v1h-4zM9.500 5.500h4v1h-4zM9.500 8h4v1h-4z" fill="#35506b" />
          <path d="M18.500 5.500h5l-2.500 3z" fill="#fff" />
        </svg>
        <div className="ml-[34px] mt-[3px] w-[37px] text-white tracking-[-0.1px]">Khác</div>
        <div className="h-full w-[182px] whitespace-nowrap bg-[#f0f0f0] pt-[2px] text-center">Buồng bệnh Khoa Nội Tổng Quát</div>
      </div>
      <Ribbon />

      <div className="flex h-[24px] shrink-0 font-bold tracking-[0.12px] text-[#008000]">
        <div className="flex h-full w-[292px] items-center border-b border-[#b5b5b5] pl-[12px] pt-[4px]">
          <span className="w-[264px] whitespace-nowrap">Buồng bệnh (Khoa Nội tổng quát_Phòng 9B4)</span>
          <CloseX />
        </div>
        <div className="mt-[2px] flex h-[22px] w-[337px] items-center border-x border-t border-[#b5b5b5] pl-[11px]">
          <span className="w-[307px] whitespace-nowrap">Tổng hợp phiếu lĩnh (Khoa Nội tổng quát_Phòng 9B4)</span>
          <CloseX />
        </div>
        <div className="h-full flex-1 border-b border-[#b5b5b5]" />
      </div>

      <div className="flex h-[532px] shrink-0 border-b border-[#b5b5b5]">
        <Filters />

        <div className="flex w-[566px] shrink-0 flex-col">
          <div className="flex h-[25px] shrink-0 gap-[4px] pl-[2px] pt-[2px] text-center leading-[22px]">
            <div className="h-[23px] w-[111px] border border-[#a0a0a0]">Tổng hợp (Ctrl T)</div>
            <div className="h-[23px] w-[117px] border border-[#d0d0d0] text-[#a0a0a0]">In tra đối tổng hợp</div>
          </div>
          <IssueGrid />
          <div className="flex h-[29px] shrink-0 items-center gap-[7px] pl-[5px] pt-[3px] tracking-[-0.2px]">In ngay: <Check /></div>
          <SlipGrid />
          <Pager total="/74" range="1 - 50/3690" cls="ml-[8px] mt-[6px] pr-[2px]" btn="h-[18px]" tw="w-[62px]" />
        </div>

        <div className="ml-[4px] flex w-[563px] shrink-0 flex-col">
          <div className="flex h-[25px] shrink-0 items-center gap-[3px] whitespace-nowrap pl-[3px]"><Check />Hiển thị thuốc/ vật tư theo từng</div>
          <DrugGrid />
          <DetailGrid />
          <Pager total="/2" range="1 - 50/51" cls="ml-[2px] mt-[6px] pr-[4px]" btn="h-[20px]" tw="w-[63px]" />
        </div>
      </div>

      <div className="absolute left-[957px] top-[92px] flex h-[76px] w-[162px] flex-col border border-[#a0a0a0] bg-white pt-[2px] tracking-[-0.55px] shadow-[3px_3px_3px_rgba(0,0,0,0.55)]">
        {["Danh sách phiếu lĩnh", "Tổng hợp phiếu lĩnh", "Tổng hợp phiếu trả"].map((t, i) => (
          <div key={t} className="flex h-[24px] items-center gap-[11px] pl-[6px]"><Crate red={i === 2} />{t}</div>
        ))}
      </div>

      <div className="absolute left-[223px] top-[134px] h-[166px] w-[170px] border-[5px] border-[#ed1c24]" />
      <div className="absolute left-[946px] top-[12px] h-[173px] w-[190px] border-[5px] border-[#ed1c24]" />
    </div>
  );
}
